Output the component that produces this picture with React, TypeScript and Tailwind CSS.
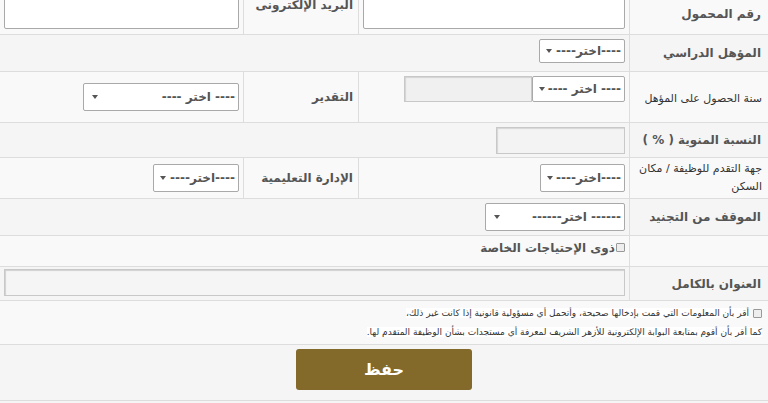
import React from 'react';

const font = { fontFamily: 'Tahoma, "DejaVu Sans", sans-serif' };

function Arrow() {
  return (
    <svg width="6" height="4" viewBox="0 0 6 4" className="shrink-0">
      <path d="M0 0h6L3 4z" fill="#555" />
    </svg>
  );
}

function FakeSelect({ text, className }: { text: string; className: string }) {
  return (
    <div
      className={`flex items-center justify-between bg-white border border-[#a9a9a9] rounded-[2px] pr-[3px] pl-[6px] text-[12px] font-bold text-[#555] whitespace-pre ${className}`}
    >
      <span>{text}</span>
      <Arrow />
    </div>
  );
}

function Label({ children, className = '', small = false }: { children: React.ReactNode; className?: string; small?: boolean }) {
  return (
    <div
      className={`flex ${small ? 'text-[11px] font-medium leading-[18px] whitespace-nowrap text-[#333]' : 'text-[12px] font-bold leading-[18px] text-[#555]'} ${className}`}
    >
      {children}
    </div>
  );
}

export default function App() {
  return (
    <div dir="rtl" style={font} className="w-[768px] h-[403px] overflow-hidden bg-[#f5f5f5]">
      {/* رقم المحمول / البريد */}
      <div className="flex h-[41px] -mt-[6px] border-b border-[#ddd] bg-[#f9f9f9]">
        <Label className="w-[139px] border-l border-[#ddd] items-center pr-[7px]">رقم المحمول</Label>
        <div className="w-[271px] border-l border-[#ddd] flex items-end pb-[5px] px-[4px]">
          <div className="w-full h-[40px] bg-white border border-[#a9a9a9] rounded-[2px]" />
        </div>
        <Label className="w-[115px] border-l border-[#ddd] items-start pt-[2px] pr-[5px]">البريد الإلكترونى</Label>
        <div className="flex-1 flex items-end pb-[5px] pr-[4px] pl-[4px]">
          <div className="w-full h-[40px] bg-white border border-[#a9a9a9] rounded-[2px]" />
        </div>
      </div>

      {/* المؤهل الدراسي */}
      <div className="flex h-[37px] border-b border-[#ddd] bg-[#f5f5f5]">
        <Label className="w-[139px] border-l border-[#ddd] items-center pr-[7px]">المؤهل الدراسي</Label>
        <div className="flex-1 flex items-start pt-[4px] pr-[4px]">
          <FakeSelect text="----اختر----" className="w-[86px] h-[24px]" />
        </div>
      </div>

      {/* سنة الحصول على المؤهل / التقدير */}
      <div className="flex h-[51px] border-b border-[#ddd] bg-[#f9f9f9]">
        <Label small className="w-[139px] border-l border-[#ddd] items-center pr-[6px] pt-[3px]">
          سنة الحصول على المؤهل
        </Label>
        <div className="w-[271px] border-l border-[#ddd] flex items-start pt-[4px] pr-[4px]">
          <FakeSelect text="---- اختر ----" className="w-[93px] h-[26px]" />
          <div className="w-[128px] h-[26px] bg-[#f0f0f0] border border-[#c8c8c8] shadow-[inset_1px_1px_1px_rgba(0,0,0,0.12)]" />
        </div>
        <Label className="w-[115px] border-l border-[#ddd] items-center pr-[5px]">التقدير</Label>
        <div className="flex-1 flex items-center pr-[4px]">
          <FakeSelect text="---- اختر ----" className="w-[156px] h-[28px] pl-[8px]" />
        </div>
      </div>

      {/* النسبة المنوية */}
      <div className="flex h-[35px] border-b border-[#ddd] bg-[#f5f5f5]">
        <Label className="w-[139px] border-l border-[#ddd] items-center pr-[7px]">النسبة المنوية ( % )</Label>
        <div className="flex-1 flex items-start pt-[4px] pr-[4px]">
          <div className="w-[129px] h-[27px] bg-[#f3f3f3] border border-[#c8c8c8] shadow-[inset_1px_1px_1px_rgba(0,0,0,0.12)]" />
        </div>
      </div>

      {/* جهة التقدم / الإدارة التعليمية */}
      <div className="flex h-[41px] border-b border-[#ddd] bg-[#f9f9f9]">
        <Label small className="w-[139px] border-l border-[#ddd] items-center pr-[6px]">
          <span>
            جهة التقدم للوظيفة / مكان
            <br />
            السكن
          </span>
        </Label>
        <div className="w-[271px] border-l border-[#ddd] flex items-center pr-[4px]">
          <FakeSelect text="----اختر----" className="w-[85px] h-[28px]" />
        </div>
        <Label className="w-[115px] border-l border-[#ddd] items-center pr-[5px]">الإدارة التعليمية</Label>
        <div className="flex-1 flex items-center pr-[4px]">
          <FakeSelect text="----اختر----" className="w-[86px] h-[28px]" />
        </div>
      </div>

      {/* الموقف من التجنيد */}
      <div className="flex h-[37px] border-b border-[#ddd] bg-[#f5f5f5]">
        <Label className="w-[139px] border-l border-[#ddd] items-center pr-[7px]">الموقف من التجنيد</Label>
        <div className="flex-1 flex items-center pr-[4px]">
          <FakeSelect text="------ اختر------" className="w-[140px] h-[28px] pl-[8px]" />
        </div>
      </div>

      {/* ذوى الإحتياجات الخاصة */}
      <div className="flex h-[31px] border-b border-[#ddd] bg-[#f9f9f9]">
        <div className="w-[139px] border-l border-[#ddd]" />
        <div className="flex-1 flex items-start pt-[3px] pr-[4px] gap-[1px]">
          <span className="mt-[4px] w-[9px] h-[9px] border border-[#999] bg-[#eee] rounded-[1px]" />
          <Label>ذوى الإحتياجات الخاصة</Label>
        </div>
      </div>

      {/* العنوان بالكامل */}
      <div className="flex h-[34px] border-b border-[#ddd] bg-[#f5f5f5]">
        <Label className="w-[139px] border-l border-[#ddd] items-center pr-[7px]">العنوان بالكامل</Label>
        <div className="flex-1 flex items-start pt-[2px] px-[4px]">
          <div className="w-full h-[27px] bg-[#f5f5f5] border border-[#c8c8c8] shadow-[inset_1px_1px_1px_rgba(0,0,0,0.15)]" />
        </div>
      </div>

      {/* الإقرار */}
      <div className="h-[44px] border-b border-[#ddd] bg-[#f9f9f9] pr-[6px] pt-[3px] text-[9px] leading-[19px] text-[#333]">
        <span className="inline-block align-middle ml-[4px] w-[9px] h-[9px] border border-[#999] bg-[#eee] rounded-[1px]" />
        <span className="bg-white">
          أقر بأن المعلومات التي قمت بإدخالها صحيحة، وأتحمل أي مسؤولية قانونية إذا كانت غير ذلك،
        </span>
        <br />
        <span className="bg-white">
          كما أقر بأن أقوم بمتابعة البوابة الإلكترونية للأزهر الشريف لمعرفة أي مستجدات بشأن الوظيفة المتقدم لها.
        </span>
      </div>

      {/* حفظ */}
      <div className="h-[56px] border-b border-[#ddd] bg-[#f5f5f5] flex justify-center pt-[4px]">
        <button className="w-[176px] h-[41px] bg-[#836a2a] rounded-[3px] text-white text-[16px] font-bold">
          حفظ
        </button>
      </div>
    </div>
  );
}
